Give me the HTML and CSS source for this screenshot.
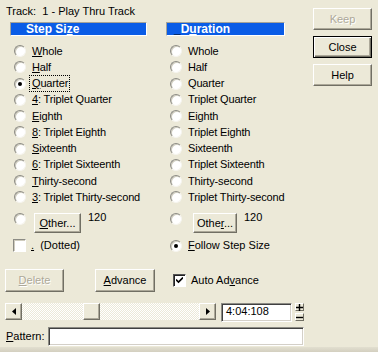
FILE: index.html
```html
<!DOCTYPE html>
<html lang="en">
<head>
    <meta charset="UTF-8">
    <title>Step Record</title>
    <link rel="stylesheet" href="styles.css">
</head>
<body>
<div class="dialog">
    <div class="top">
        <div class="main">
            <div class="track">Track:&nbsp; 1 - Play Thru Track</div>
            <div class="groups">
                <!-- Step size -->
                <div class="group group-step">
                    <div class="header header-step">Step Si<u>z</u>e</div>
                    <ul class="options">
                        <li class="opt"><span class="radio"></span><span><u>W</u>hole</span></li>
                        <li class="opt"><span class="radio"></span><span><u>H</u>alf</span></li>
                        <li class="opt"><span class="radio on"></span><span class="focus"><u>Q</u>uarter</span></li>
                        <li class="opt"><span class="radio"></span><span><u>4</u>: Triplet Quarter</span></li>
                        <li class="opt"><span class="radio"></span><span><u>E</u>ighth</span></li>
                        <li class="opt"><span class="radio"></span><span><u>8</u>: Triplet Eighth</span></li>
                        <li class="opt"><span class="radio"></span><span><u>S</u>ixteenth</span></li>
                        <li class="opt"><span class="radio"></span><span><u>6</u>: Triplet Sixteenth</span></li>
                        <li class="opt"><span class="radio"></span><span><u>T</u>hirty-second</span></li>
                        <li class="opt"><span class="radio"></span><span><u>3</u>: Triplet Thirty-second</span></li>
                    </ul>
                    <div class="other">
                        <span class="radio"></span>
                        <button class="btn btn-other"><u>O</u>ther...</button>
                        <span class="value">120</span>
                    </div>
                    <div class="check-row">
                        <span class="checkbox"></span>
                        <span><u>.</u>&nbsp; (Dotted)</span>
                    </div>
                </div>

                <!-- Duration -->
                <div class="group group-dur">
                    <div class="header header-dur"><span class="caret">_</span>D<u>u</u>ration</div>
                    <ul class="options">
                        <li class="opt"><span class="radio"></span><span>Whole</span></li>
                        <li class="opt"><span class="radio"></span><span>Half</span></li>
                        <li class="opt"><span class="radio"></span><span>Quarter</span></li>
                        <li class="opt"><span class="radio"></span><span>Triplet Quarter</span></li>
                        <li class="opt"><span class="radio"></span><span>Eighth</span></li>
                        <li class="opt"><span class="radio"></span><span>Triplet Eighth</span></li>
                        <li class="opt"><span class="radio"></span><span>Sixteenth</span></li>
                        <li class="opt"><span class="radio"></span><span>Triplet Sixteenth</span></li>
                        <li class="opt"><span class="radio"></span><span>Thirty-second</span></li>
                        <li class="opt"><span class="radio"></span><span>Triplet Thirty-second</span></li>
                    </ul>
                    <div class="other">
                        <span class="radio"></span>
                        <button class="btn btn-other btn-other-dur">Othe<u>r</u>...</button>
                        <span class="value">120</span>
                    </div>
                    <div class="check-row">
                        <span class="radio on"></span>
                        <span class="follow"><u>F</u>ollow Step Size</span>
                    </div>
                </div>
            </div>
        </div>

        <div class="side">
            <button class="btn disabled">Keep</button>
            <button class="btn default">Close</button>
            <button class="btn">Help</button>
        </div>
    </div>

    <div class="actions">
        <button class="btn btn-delete disabled"><u>D</u>elete</button>
        <button class="btn btn-advance"><u>A</u>dvance</button>
        <span class="checkbox checked">
            <svg width="7" height="7" viewBox="0 0 7 7"><path d="M0 2.5 L2.5 5 L7 0.5" fill="none" stroke="#000" stroke-width="1.6"/></svg>
        </span>
        <span class="auto-label">Auto Ad<u>v</u>ance</span>
    </div>

    <div class="scroll-row">
        <div class="scrollbar">
            <span class="sb-btn">
                <svg width="4" height="7" viewBox="0 0 4 7"><path d="M4 0 L0 3.5 L4 7 Z" fill="#000"/></svg>
            </span>
            <span class="sb-track"><span class="sb-thumb"></span></span>
            <span class="sb-btn">
                <svg width="4" height="7" viewBox="0 0 4 7"><path d="M0 0 L4 3.5 L0 7 Z" fill="#000"/></svg>
            </span>
        </div>
        <div class="field time-field">4:04:108</div>
        <div class="spin">
            <span class="spin-btn">
                <svg width="7" height="7" viewBox="0 0 7 7"><path d="M0 3.5 H7 M3.5 0 V7" stroke="#000" stroke-width="1.4"/></svg>
            </span>
            <span class="spin-btn">
                <svg width="7" height="7" viewBox="0 0 7 7"><path d="M0 3.5 H7" stroke="#000" stroke-width="1.4"/></svg>
            </span>
        </div>
    </div>

    <div class="pattern-row">
        <span class="pattern-label"><u>P</u>attern:</span>
        <div class="field pattern-field"></div>
    </div>

    <div class="frame-bottom"></div>
</div>
</body>
</html>
```

FILE: styles.css
```css
* { box-sizing: border-box; }
body { margin: 0; background: #ECE9D8; color: #000; font: 11px/13px "Liberation Sans", Arial, sans-serif; }
u { text-decoration: underline; text-underline-offset: 1px; }

.dialog { width: 378px; height: 352px; display: flex; flex-direction: column; overflow: hidden; }
.top { display: flex; }
.main { width: 313px; }
.track { margin: 5px 0 0 6px; height: 13px; }

.groups { display: flex; gap: 19px; margin: 4px 0 0 10px; }
.group-step { width: 137px; }
.group-dur { width: 119px; }

.header { height: 14px; background: #0A5CE6; color: #fff; font-weight: bold; font-size: 12px; line-height: 12px;
    border: 1px solid; border-color: #A5A398 #fff #fff #A5A398; white-space: nowrap; }
.header-step { padding-left: 15px; }
.header-dur { padding-left: 7px; }
.header .caret { color: #000; }

.options { list-style: none; margin: 7px 0 0; padding: 0; letter-spacing: -0.15px; }
.opt { display: flex; align-items: center; gap: 6px; height: 16.25px; padding-left: 4px; white-space: nowrap; }
.focus { outline: 1px dotted #000; outline-offset: 0; margin-left: -2px; padding: 1px 1px 1px 2px; }

.radio { flex: none; width: 12px; height: 12px; border-radius: 50%; background: #fff; position: relative;
    border: 1px solid; border-color: #8C8B84 #F6F5EF #F6F5EF #8C8B84; box-shadow: inset 1px 1px 0 #CFCCBE; }
.radio.on::after { content: ""; position: absolute; left: 3px; top: 3px; width: 4px; height: 4px; border-radius: 50%; background: #000; }

.checkbox { flex: none; width: 13px; height: 13px; background: #fff; display: flex; align-items: center; justify-content: center;
    border: 1px solid; border-color: #8C8B84 #fff #fff #8C8B84; box-shadow: inset 1px 1px 0 #CFCCBE; }
.checkbox.checked { border-color: #555 #fff #fff #555; box-shadow: inset 1px 1px 0 #222; }

.other { display: flex; align-items: flex-start; margin-top: 7.5px; padding-left: 4px; height: 20px; }
.value { margin: -2px 0 0 7px; }
.check-row { display: flex; align-items: center; gap: 5px; margin-top: 6px; height: 13px; padding-left: 3px; white-space: nowrap; }
.group-dur .check-row { padding-left: 4px; gap: 6px; }

.btn { font: inherit; color: #000; background: #ECE9D8; padding: 0; margin: 0; height: 22px; width: 59px;
    border: 1px solid; border-color: #fff #716F64 #716F64 #fff; box-shadow: inset -1px -1px 0 #ACA899; }
.btn.disabled { color: #ACA899; text-shadow: 1px 1px 0 #fff; }
.btn.default { border-color: #000; box-shadow: inset 1px 1px 0 #fff, inset -1px -1px 0 #716F64, inset -2px -2px 0 #ACA899; }
.btn-other { width: 47px; height: 20px; margin-left: 8px; }
.btn-other-dur { width: 44px; margin-left: 11px; }

.side { display: flex; flex-direction: column; gap: 6px; padding-top: 8px; }

.actions { display: flex; align-items: center; margin-top: 17px; height: 23px; }
.btn-delete { height: 23px; margin-left: 5px; }
.btn-advance { height: 23px; width: 60px; margin-left: 31px; }
.actions .checkbox { margin-left: 18px; }
.auto-label { margin-left: 5px; }

.scroll-row { display: flex; align-items: flex-start; margin-top: 11px; height: 19px; }
.scrollbar { display: flex; margin-left: 5px; width: 211px; height: 17px; }
.sb-btn { flex: none; width: 17px; height: 17px; display: flex; align-items: center; justify-content: center; background: #ECE9D8;
    border: 1px solid; border-color: #fff #716F64 #716F64 #fff; box-shadow: inset -1px -1px 0 #ACA899; }
.sb-track { flex: 1; display: flex; background: repeating-conic-gradient(#fff 0 25%, #ECE9D8 0 50%) 0 0 / 2px 2px; }
.sb-thumb { width: 17px; height: 17px; margin-left: 61px; background: #ECE9D8;
    border: 1px solid; border-color: #fff #716F64 #716F64 #fff; box-shadow: inset -1px -1px 0 #ACA899; }

.field { background: #fff; border: 1px solid; border-color: #8C8B84 #fff #fff #8C8B84;
    box-shadow: inset 1px 1px 0 #404040, inset -1px -1px 0 #D4D0C8; }
.time-field { margin-left: 5px; width: 71px; height: 19px; padding: 1px 0 0 4px; }

.spin { display: flex; flex-direction: column; gap: 2px; margin-left: 3px; }
.spin-btn { width: 9px; height: 8px; display: flex; align-items: center; justify-content: center; background: #ECE9D8;
    border: 1px solid; border-color: #fff #716F64 #716F64 #fff; }

.pattern-row { display: flex; align-items: center; margin-top: 5px; height: 19px; }
.pattern-label { margin-left: 6px; width: 42px; }
.pattern-field { width: 256px; height: 19px; }

.frame-bottom { margin-top: auto; height: 5px; background: linear-gradient(#E2DFD0, #D3CFBF); }
```
